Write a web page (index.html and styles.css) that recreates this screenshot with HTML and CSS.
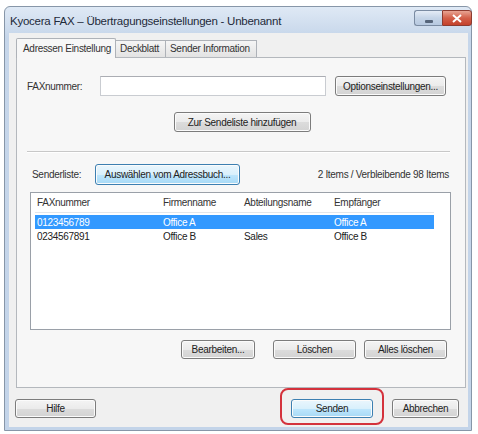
FILE: index.html
```html
<!DOCTYPE html>
<html lang="de">

<head>
  <meta charset="UTF-8" />
  <meta name="viewport" content="width=device-width, initial-scale=1.0" />
  <title>Kyocera FAX - Übertragungseinstellungen</title>
  <link rel="stylesheet" href="styles.css">
</head>

<body>
  <div class="window">
    <div class="titlebar">
      <span class="title">Kyocera FAX – Übertragungseinstellungen - Unbenannt</span>
      <div class="caption-buttons">
        <span class="cap-btn minimize"><span class="dash"></span></span>
        <span class="cap-btn close">
          <svg width="12" height="9" viewBox="0 0 12 9">
            <path d="M2 1 L10 8 M10 1 L2 8" stroke="#fff" stroke-width="2" />
          </svg>
        </span>
      </div>
    </div>

    <div class="client">
      <div class="tabs">
        <span class="tab active">Adressen Einstellung</span>
        <span class="tab">Deckblatt</span>
        <span class="tab">Sender Information</span>
      </div>

      <div class="panel">
        <div class="row fax-row">
          <label for="fax">FAXnummer:</label>
          <input type="text" id="fax" />
          <button class="btn options">Optionseinstellungen...</button>
        </div>

        <div class="row add-row">
          <button class="btn add">Zur Sendeliste hinzufügen</button>
        </div>

        <div class="separator"></div>

        <div class="row list-row">
          <span class="list-label">Senderliste:</span>
          <button class="btn focused pick">Auswählen vom Adressbuch...</button>
          <span class="count">2 Items / Verbleibende 98 Items</span>
        </div>

        <div class="listview">
          <div class="lv-header">
            <span class="col c1">FAXnummer</span>
            <span class="col c2">Firmenname</span>
            <span class="col c3">Abteilungsname</span>
            <span class="col c4">Empfänger</span>
          </div>
          <div class="lv-row selected">
            <span class="col c1">0123456789</span>
            <span class="col c2">Office A</span>
            <span class="col c3"></span>
            <span class="col c4">Office A</span>
          </div>
          <div class="lv-row">
            <span class="col c1">0234567891</span>
            <span class="col c2">Office B</span>
            <span class="col c3">Sales</span>
            <span class="col c4">Office B</span>
          </div>
        </div>

        <div class="row edit-row">
          <button class="btn edit">Bearbeiten...</button>
          <button class="btn del">Löschen</button>
          <button class="btn del-all">Alles löschen</button>
        </div>
      </div>

      <div class="bottom-row">
        <button class="btn help">Hilfe</button>
        <span class="spacer"></span>
        <span class="highlight">
          <button class="btn focused send">Senden</button>
        </span>
        <button class="btn cancel">Abbrechen</button>
      </div>
    </div>
  </div>
</body>

</html>
```

FILE: styles.css
```css
body {
  margin: 0;
  background: #ffffff;
  font-family: "Liberation Sans", Arial, sans-serif;
  font-size: 10px;
  letter-spacing: -0.3px;
  color: #222;
}

.window {
  margin: 6px 0 0 4px;
  width: 468px;
  height: 425px;
  box-sizing: border-box;
  border: 1px solid #8796a8;
  border-radius: 6px 6px 0 0;
  background: linear-gradient(#dfe9f5, #c6d6ea 30px, #c3d4e9);
  display: flex;
  flex-direction: column;
}

.titlebar {
  height: 26px;
  display: flex;
  align-items: center;
  padding-left: 5px;
}

.title {
  font-size: 11.5px;
  letter-spacing: -0.25px;
  color: #1e2a3a;
  flex: 1;
  padding-top: 2px;
}

.caption-buttons {
  display: flex;
  align-self: flex-start;
  margin-top: 3px;
  margin-right: -1px;
}

.cap-btn {
  height: 16px;
  display: flex;
  align-items: center;
  justify-content: center;
  border: 1px solid #7a8ba2;
  box-sizing: border-box;
}

.minimize {
  width: 28px;
  border-radius: 3px 0 0 3px;
  border-right: none;
  background: linear-gradient(#e4ecf6, #c5d4e7 50%, #b7c9e0);
}

.minimize .dash {
  width: 8px;
  height: 3px;
  margin-top: 6px;
  background: #56657a;
  border-radius: 1px;
}

.close {
  width: 30px;
  border-radius: 0 3px 3px 0;
  border-color: #8d3b30;
  background: linear-gradient(#e8a493, #d3604a 50%, #c4412b);
}

.client {
  flex: 1;
  margin: 0 3px 3px 4px;
  background: #f0f0f0;
  padding: 5px 2px 0 7px;
  display: flex;
  flex-direction: column;
}

.tabs {
  display: flex;
  height: 19px;
  align-items: flex-end;
  position: relative;
  z-index: 1;
}

.tab {
  height: 17px;
  box-sizing: border-box;
  border: 1px solid #aeb2b8;
  border-bottom: none;
  background: linear-gradient(#f5f5f5, #e3e3e3);
  padding: 2px 4px 0;
  margin-left: -1px;
  color: #333;
}

.tab.active {
  height: 20px;
  margin-left: 0;
  margin-bottom: -1px;
  background: #f7f7f7;
  padding: 4px 4px 0 6px;
  border-radius: 2px 2px 0 0;
  width: 100px;
}

.tab:nth-child(2) {
  width: 51px;
}

.tab:nth-child(3) {
  width: 92px;
}

.panel {
  height: 331px;
  box-sizing: border-box;
  border: 1px solid #b4b8bd;
  background: #f7f7f7;
  display: flex;
  flex-direction: column;
}

.row {
  display: flex;
  align-items: center;
}

.btn {
  font-family: inherit;
  font-size: 10px;
  letter-spacing: -0.3px;
  color: #222;
  height: 19px;
  padding: 0;
  border: 1px solid #7c7c7c;
  border-radius: 3px;
  background: linear-gradient(#f4f4f4, #ebebeb 50%, #dcdcdc 51%, #d3d3d3);
  box-shadow: inset 0 0 0 1px #fbfbfb;
}

.btn.focused {
  border-color: #3c7fb1;
  background: linear-gradient(#eaf6fd, #d9f0fc 50%, #bee6fd 51%, #a7d9f5);
}

.fax-row {
  margin-top: 18px;
  padding-left: 10px;
}

.fax-row label {
  width: 73px;
  color: #333;
}

.fax-row input {
  width: 226px;
  height: 20px;
  box-sizing: border-box;
  border: 1px solid #c9ccd1;
  border-top-color: #abadb3;
  background: #fff;
  margin: 0;
}

.options {
  width: 111px;
  height: 20px;
  margin-left: 9px;
}

.add-row {
  justify-content: center;
  margin-top: 16px;
  padding-left: 2px;
}

.add {
  width: 137px;
  height: 20px;
}

.separator {
  margin: 19px 15px 0 10px;
  border-top: 1px solid #c8c8c8;
  border-bottom: 1px solid #ffffff;
}

.list-row {
  margin-top: 11px;
  padding: 0 16px 0 15px;
}

.list-label {
  width: 63px;
  color: #333;
}

.pick {
  width: 145px;
  height: 21px;
}

.count {
  margin-left: auto;
  color: #333;
}

.listview {
  margin: 7px 14px 0 13px;
  height: 138px;
  box-sizing: border-box;
  border: 1px solid #9aa0a8;
  background: #fff;
  padding: 0 16px 0 4px;
}

.lv-header {
  display: flex;
  height: 19px;
  align-items: center;
  border-bottom: 1px solid #e4e6ea;
  margin-bottom: 2px;
  color: #333;
}

.lv-row {
  display: flex;
  height: 14px;
  align-items: center;
}

.lv-row.selected {
  background: #3399ff;
  color: #fff;
}

.col {
  padding-left: 2px;
  white-space: nowrap;
}

.c1 { width: 124px; }
.c2 { width: 79px; }
.c3 { width: 88px; }
.c4 { flex: 1; }

.edit-row {
  margin-top: 10px;
  justify-content: flex-end;
  padding-right: 18px;
}

.edit {
  width: 74px;
}

.del {
  width: 83px;
  margin-left: 18px;
}

.del-all {
  width: 83px;
  margin-left: 8px;
}

.bottom-row {
  display: flex;
  align-items: center;
  margin-top: 11px;
  padding-right: 7px;
}

.help {
  width: 81px;
  margin-left: -1px;
}

.spacer {
  flex: 1;
}

.highlight {
  position: relative;
  display: flex;
}

.highlight::after {
  content: "";
  position: absolute;
  left: -11px;
  right: -11px;
  top: -11px;
  bottom: -7px;
  border: 2.5px solid #d4323c;
  border-radius: 8px;
}

.send {
  width: 82px;
}

.cancel {
  width: 67px;
  margin-left: 19px;
}
```
